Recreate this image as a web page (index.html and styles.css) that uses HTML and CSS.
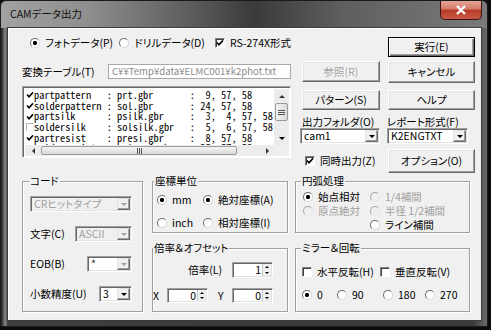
FILE: index.html
```html
<!DOCTYPE html>
<html lang="ja">
<head>
  <meta charset="UTF-8">
  <title>CAMデータ出力</title>
  <link rel="stylesheet" href="styles.css">
</head>
<body>
  <div class="window">
    <div class="titlebar">
      <span class="title">CAMデータ出力</span>
      <span class="close">
        <svg width="12" height="10" viewBox="0 0 12 10"><path d="M2 1 L10 9 M10 1 L2 9" stroke="#fff" stroke-width="2.4"/></svg>
      </span>
    </div>

    <div class="client">
      <div class="upper">
        <div class="left">
          <div class="modes">
            <span class="opt photo"><i class="radio on"></i>フォトデータ(P)</span>
            <span class="opt drill"><i class="radio"></i>ドリルデータ(D)</span>
            <span class="opt"><i class="check"><svg width="8" height="8" viewBox="0 0 8 8"><path d="M1 3.5 L3 5.8 L7 1.4" fill="none" stroke="#000" stroke-width="1.6"/></svg></i>RS-274X形式</span>
          </div>

          <div class="table-row">
            <span>変換テーブル(T)</span>
            <div class="field">C¥¥Temp¥data¥ELMC001¥k2phot.txt</div>
          </div>

          <div class="listbox">
            <div class="list-main">
              <div class="rows">
                <div class="row"><i class="lcheck"><svg width="8" height="8" viewBox="0 0 8 8"><path d="M1 3.5 L3 5.8 L7 1.4" fill="none" stroke="#000" stroke-width="1.6"/></svg></i>partpattern   : prt.gbr       :  9, 57, 58</div>
                <div class="row"><i class="lcheck"><svg width="8" height="8" viewBox="0 0 8 8"><path d="M1 3.5 L3 5.8 L7 1.4" fill="none" stroke="#000" stroke-width="1.6"/></svg></i>solderpattern : sol.gbr       : 24, 57, 58</div>
                <div class="row"><i class="lcheck"><svg width="8" height="8" viewBox="0 0 8 8"><path d="M1 3.5 L3 5.8 L7 1.4" fill="none" stroke="#000" stroke-width="1.6"/></svg></i>partsilk      : psilk.gbr     :  3,  4, 57, 58</div>
                <div class="row"><i class="lcheck empty"></i>soldersilk    : solsilk.gbr   :  5,  6, 57, 58</div>
                <div class="row"><i class="lcheck"><svg width="8" height="8" viewBox="0 0 8 8"><path d="M1 3.5 L3 5.8 L7 1.4" fill="none" stroke="#000" stroke-width="1.6"/></svg></i>partresist    : presi.gbr     :  8, 57, 58</div>
                <div class="row"><i class="lcheck"><svg width="8" height="8" viewBox="0 0 8 8"><path d="M1 3.5 L3 5.8 L7 1.4" fill="none" stroke="#000" stroke-width="1.6"/></svg></i>solderresist  : solresi.gbr   : 25, 57, 58</div>
              </div>
              <div class="vscroll">
                <span class="sarrow"><i class="tri up"></i></span>
                <span class="vthumb"><i class="grip-h"></i></span>
                <span class="vtrack"></span>
                <span class="sarrow"><i class="tri down"></i></span>
              </div>
            </div>
            <div class="hscroll">
              <span class="sarrow"><i class="tri left"></i></span>
              <span class="htrack"><span class="hthumb"><i class="grip-v"></i></span></span>
              <span class="sarrow"><i class="tri right"></i></span>
              <span class="corner"></span>
            </div>
          </div>
        </div>

        <div class="right">
          <button class="btn default c2">実行(E)</button>
          <button class="btn" disabled>参照(R)</button>
          <button class="btn tall">キャンセル</button>
          <button class="btn">パターン(S)</button>
          <button class="btn">ヘルプ</button>
          <span class="flabel">出力フォルダ(O)</span>
          <span class="flabel">レポート形式(F)</span>
          <div class="combo folder"><span class="val">cam1</span><span class="dd"><i class="tri down"></i></span></div>
          <div class="combo report"><span class="val">K2ENGTXT</span><span class="dd"><i class="tri down"></i></span></div>
          <span class="opt sync"><i class="check"><svg width="8" height="8" viewBox="0 0 8 8"><path d="M1 3.5 L3 5.8 L7 1.4" fill="none" stroke="#000" stroke-width="1.6"/></svg></i>同時出力(Z)</span>
          <button class="btn option">オプション(O)</button>
        </div>
      </div>

      <div class="groups">
        <fieldset class="group code">
          <legend>コード</legend>
          <div class="code-body">
            <div class="crow">
              <div class="combo off w-cr"><span class="val">CRヒットタイプ</span><span class="dd"><i class="tri down"></i></span></div>
            </div>
            <div class="crow">
              <span>文字(C)</span>
              <div class="combo off w-char"><span class="val">ASCII</span><span class="dd"><i class="tri down"></i></span></div>
            </div>
            <div class="crow">
              <span>EOB(B)</span>
              <div class="combo half w-eob"><span class="val">*</span><span class="dd"><i class="tri down"></i></span></div>
            </div>
            <div class="crow">
              <span>小数精度(U)</span>
              <div class="combo w-dec"><span class="val">3</span><span class="dd"><i class="tri down"></i></span></div>
            </div>
          </div>
        </fieldset>

        <div class="midcol">
          <fieldset class="group units">
            <legend>座標単位</legend>
            <div class="units-body">
              <span class="opt"><i class="radio on"></i>mm</span>
              <span class="opt"><i class="radio on"></i>絶対座標(A)</span>
              <span class="opt"><i class="radio"></i>inch</span>
              <span class="opt"><i class="radio"></i>相対座標(I)</span>
            </div>
          </fieldset>

          <fieldset class="group scale">
            <legend>倍率＆オフセット</legend>
            <div class="scale-body">
              <span class="scale-label">倍率(L)</span>
              <div class="spin c5"><span class="num">1</span><span class="arrows"><i class="tri up"></i><i class="tri down"></i></span></div>
              <span>X</span>
              <div class="spin"><span class="num">0</span><span class="arrows"><i class="tri up"></i><i class="tri down"></i></span></div>
              <span></span>
              <span>Y</span>
              <div class="spin"><span class="num">0</span><span class="arrows"><i class="tri up"></i><i class="tri down"></i></span></div>
            </div>
          </fieldset>
        </div>

        <div class="rightcol">
          <fieldset class="group arc">
            <legend>円弧処理</legend>
            <div class="arc-body">
              <span class="opt"><i class="radio on"></i>始点相対</span>
              <span class="opt dis"><i class="radio off"></i>1/4補間</span>
              <span class="opt dis"><i class="radio off"></i>原点絶対</span>
              <span class="opt dis"><i class="radio off"></i>半径 1/2補間</span>
              <span class="opt c2"><i class="radio"></i>ライン補間</span>
            </div>
          </fieldset>

          <fieldset class="group mirror">
            <legend>ミラー＆回転</legend>
            <div class="mirror-body">
              <div class="flip-row">
                <span class="opt"><i class="check"></i>水平反転(H)</span>
                <span class="opt"><i class="check"></i>垂直反転(V)</span>
              </div>
              <div class="rot-row">
                <span class="opt"><i class="radio on"></i>0</span>
                <span class="opt"><i class="radio"></i>90</span>
                <span class="opt"><i class="radio"></i>180</span>
                <span class="opt"><i class="radio"></i>270</span>
              </div>
            </div>
          </fieldset>
        </div>
      </div>
    </div>
  </div>
</body>
</html>
```

FILE: styles.css
```css
* {
  box-sizing: border-box;
}

body {
  margin: 0;
  background: #0c0c0c;
  font-family: "Noto Sans CJK JP", sans-serif;
  font-size: 10.5px;
  line-height: 12px;
  font-feature-settings: "palt";
  color: #000;
}

/* window frame (Aero-like glass): light title strip, dark side frames */
.window {
  width: 488px;
  height: 327px;
  padding: 0 6px 6px 7px;
  border: 1px solid #1a1a1a;
  border-radius: 6px 6px 0 0;
  background:
    linear-gradient(to right, #202020, #4a4a4a 2px, #8a8a8a 4px, #3e3e3e 7px, #3a3a3a 97%, #6a6a6a) 0 27px / 100% 100% no-repeat,
    linear-gradient(to right, #a2a2a2 0%, #8e8e8e 18%, #5a5a5a 40%, #3a3a3a 52%, #5e5e5e 70%, #7a7a7a 100%);
  display: flex;
  flex-direction: column;
}

.titlebar {
  height: 27px;
  display: flex;
  justify-content: space-between;
  align-items: flex-start;
  margin-right: -1px;
}

.title {
  padding: 7px 0 0 2px;
  font-size: 10.5px;
  color: #111;
}

.close {
  width: 42px;
  height: 19px;
  border: 1px solid #3a1510;
  border-top: none;
  border-radius: 0 0 5px 5px;
  background: linear-gradient(#e3a697 0%, #d47a68 45%, #b73a26 50%, #c85a45 100%);
  display: flex;
  align-items: center;
  justify-content: center;
}

.client {
  height: 292px;
  background: #f0f0f0;
  box-shadow: 0 0 0 1px #3c3c3c, inset 1px 1px #fff;
}

/* top part */
.upper {
  height: 147px;
  padding-top: 9px;
  display: flex;
}

.left {
  width: 269px;
  margin-left: 14px;
  margin-right: 11px;
  display: flex;
  flex-direction: column;
}

.modes {
  height: 12px;
  margin-left: 8px;
  display: flex;
  align-items: center;
}

.opt {
  display: flex;
  align-items: center;
  gap: 5px;
  white-space: nowrap;
  height: 14px;
}

.opt.photo {
  width: 120px;
}

.opt.drill {
  width: 128px;
}

.dis {
  color: #a0a0a0;
}

.radio {
  width: 10px;
  height: 10px;
  flex-shrink: 0;
  border-radius: 50%;
  border: 1px solid;
  border-color: #6e6e6e #d6d6d6 #d6d6d6 #6e6e6e;
  background: #fff;
}

.radio.on {
  background: radial-gradient(circle, #000 0 1.8px, #fff 2.4px);
}

.radio.off {
  background: #f0f0f0;
  border-color: #a8a8a8 #e6e6e6 #e6e6e6 #a8a8a8;
}

.check {
  width: 10px;
  height: 10px;
  flex-shrink: 0;
  background: #fff;
  border: 1px solid;
  border-color: #808080 #fff #fff #808080;
  box-shadow: inset 1px 1px #404040;
  display: flex;
  align-items: center;
  justify-content: center;
}

.table-row {
  height: 15px;
  margin-top: 15px;
  display: flex;
  align-items: center;
}

.table-row span {
  width: 86px;
  flex-shrink: 0;
}

.field {
  width: 183px;
  height: 15px;
  padding-left: 3px;
  background: #fff;
  color: #8a8a8a;
  border: 1px solid #a9a9a9;
  white-space: nowrap;
  overflow: hidden;
  font-size: 9.6px;
  line-height: 13px;
}

/* list box */
.listbox {
  height: 72px;
  margin-top: 7px;
  border: 1px solid;
  border-color: #a0a0a0 #fff #fff #a0a0a0;
  box-shadow: inset 1px 1px #696969;
  background: #fff;
  padding: 2px 1px 1px 2px;
  display: flex;
  flex-direction: column;
}

.list-main {
  flex: 1;
  display: flex;
  min-height: 0;
}

.rows {
  flex: 1;
  overflow: hidden;
  padding: 1px 0 0 1px;
  font-family: "Noto Sans Mono CJK JP", "DejaVu Sans Mono", monospace;
  font-size: 10.4px;
  font-feature-settings: normal;
}

.row {
  height: 10.7px;
  line-height: 10.7px;
  white-space: pre;
  display: flex;
  align-items: center;
}

.lcheck {
  width: 8px;
  height: 8px;
  flex-shrink: 0;
  display: flex;
  align-items: center;
  justify-content: center;
}

.lcheck.empty {
  border: 1px solid;
  border-color: #b0b0b0 #f0f0f0 #f0f0f0 #b0b0b0;
}

.vscroll {
  width: 15px;
  background: #ececec;
  display: flex;
  flex-direction: column;
}

.sarrow {
  width: 15px;
  height: 14px;
  flex-shrink: 0;
  display: flex;
  align-items: center;
  justify-content: center;
}

.vthumb {
  height: 18px;
  margin: 0 1px;
  border: 1px solid #9a9a9a;
  border-radius: 2px;
  background: linear-gradient(to right, #f4f4f4, #dadada);
  display: flex;
  align-items: center;
  justify-content: center;
}

.vtrack {
  flex: 1;
}

.grip-h {
  width: 7px;
  height: 5px;
  border-top: 1px solid #555;
  border-bottom: 1px solid #555;
  background: linear-gradient(#555, #555) center / 100% 1px no-repeat;
}

.grip-v {
  width: 5px;
  height: 6px;
  border-left: 1px solid #555;
  border-right: 1px solid #555;
  background: linear-gradient(#555, #555) center / 1px 100% no-repeat;
}

.hscroll {
  height: 11px;
  background: #ececec;
  display: flex;
}

.hscroll .sarrow {
  height: 11px;
  width: 14px;
}

.htrack {
  flex: 1;
  padding: 1px 0;
}

.hthumb {
  width: 196px;
  height: 100%;
  margin-left: 2px;
  border: 1px solid #9a9a9a;
  border-radius: 2px;
  background: linear-gradient(#f4f4f4, #dadada);
  display: flex;
  align-items: center;
  justify-content: center;
}

.corner {
  width: 15px;
  background: #f0f0f0;
}

.tri {
  width: 0;
  height: 0;
  border: 3px solid transparent;
}

.tri.up {
  border-bottom-color: #333;
  border-top-width: 0;
}

.tri.down {
  border-top-color: #000;
  border-bottom-width: 0;
}

.tri.left {
  border-right-color: #333;
  border-left-width: 0;
}

.tri.right {
  border-left-color: #333;
  border-right-width: 0;
}

/* right button panel */
.right {
  display: grid;
  grid-template-columns: 78px 87px;
  grid-template-rows: 24px 29px 26px 12px 21px 24px;
  column-gap: 8px;
  align-items: start;
}

.btn {
  height: 20px;
  padding: 0;
  font: inherit;
  color: #000;
  background: #f0f0f0;
  border: 1px solid;
  border-color: #fff #696969 #696969 #fff;
  box-shadow: inset -1px -1px #a0a0a0, inset 1px 1px #e3e3e3;
}

.btn.c2 {
  grid-column: 2;
}

.btn.default {
  border: 1px solid #000;
  box-shadow: inset 1px 1px #fff, inset -1px -1px #696969, inset -2px -2px #a0a0a0;
}

.btn:disabled {
  color: #a0a0a0;
  text-shadow: 1px 1px #fff;
}

.btn.tall {
  height: 22px;
}

.right .btn:disabled {
  height: 21px;
}

.btn.option {
  height: 24px;
}

.flabel {
  align-self: center;
  white-space: nowrap;
}

.flabel + .flabel {
  margin-left: -1px;
}

.sync {
  align-self: center;
  margin-left: 3px;
}

/* combo box */
.combo {
  height: 16px;
  display: flex;
  padding: 1px;
  background: #fff;
  border: 1px solid;
  border-color: #a0a0a0 #fff #fff #a0a0a0;
  box-shadow: inset 1px 1px #696969, inset -1px -1px #e3e3e3;
}

.combo .val {
  flex: 1;
  padding-left: 2px;
  line-height: 12px;
  white-space: nowrap;
  overflow: hidden;
}

.combo .dd {
  width: 13px;
  height: 12px;
  flex-shrink: 0;
  background: #f0f0f0;
  border: 1px solid;
  border-color: #e3e3e3 #696969 #696969 #e3e3e3;
  box-shadow: inset -1px -1px #a0a0a0;
  display: flex;
  align-items: center;
  justify-content: center;
}

.combo.folder {
  width: 80px;
  margin-left: -2px;
}

.combo.report {
  width: 81px;
  margin-left: -1px;
}

.combo.off,
.combo.half {
  color: #a0a0a0;
}

.combo.off {
  background: #f0f0f0;
}

.combo.half .val {
  color: #333;
}

.combo.off .tri.down,
.combo.half .tri.down {
  border-top-color: #a0a0a0;
}

.w-cr { width: 102px; }
.w-char { width: 57px; }
.w-eob { width: 45px; }
.w-dec { width: 33px; }

/* group boxes */
.groups {
  display: flex;
  align-items: flex-start;
  padding-left: 14px;
}

.group {
  margin: 0;
  padding: 0;
  min-width: 0;
  border: 1px solid #a0a0a0;
  box-shadow: inset 1px 1px #fff, 1px 1px #fff;
}

.group legend {
  padding: 0 1px;
  line-height: 12px;
  background: #f0f0f0;
}

.code {
  width: 121px;
  height: 137px;
}

.code legend {
  margin-left: 6px;
}

.code-body {
  padding: 9px 0 0 7px;
  display: flex;
  flex-direction: column;
  gap: 14px;
}

.crow {
  width: 102px;
  height: 16px;
  display: flex;
  justify-content: space-between;
  align-items: center;
  white-space: nowrap;
}

.midcol {
  width: 136px;
  margin-left: 9px;
}

.rightcol {
  width: 175px;
  margin-left: 7px;
}

.units,
.arc {
  height: 58px;
}

.scale,
.mirror {
  height: 70px;
  margin-top: 9px;
}

.units legend {
  margin-left: 1px;
}

.arc legend,
.mirror legend {
  margin-left: 5px;
}

.units-body {
  padding: 6px 0 0 4px;
  display: grid;
  grid-template-columns: 46px auto;
  grid-auto-rows: 14px;
  row-gap: 9px;
}

.scale-body {
  padding-top: 8px;
  display: grid;
  grid-template-columns: 14px 41px 10px 14px 41px;
  grid-template-rows: 16px 15px;
  row-gap: 10px;
  align-items: center;
}

.scale-label {
  grid-column: 1 / 5;
  text-align: right;
  padding-right: 10px;
}

.spin.c5 {
  grid-column: 5;
}

.spin {
  height: 100%;
  display: flex;
  padding: 1px;
  background: #fff;
  border: 1px solid;
  border-color: #a0a0a0 #fff #fff #a0a0a0;
  box-shadow: inset 1px 1px #696969, inset -1px -1px #e3e3e3;
}

.spin .num {
  flex: 1;
  text-align: right;
  padding-right: 1px;
  line-height: 12px;
}

.spin .arrows {
  width: 9px;
  display: flex;
  flex-direction: column;
  align-items: center;
  justify-content: space-around;
  background: #f0f0f0;
  border-left: 1px solid #c8c8c8;
}

.spin .tri {
  border-width: 2px;
}

.spin .tri.up {
  border-top-width: 0;
  border-bottom-color: #000;
}

.spin .tri.down {
  border-bottom-width: 0;
}

.arc-body {
  padding: 3px 0 0 7px;
  display: grid;
  grid-template-columns: 67px auto;
  grid-auto-rows: 14px;
}

.arc-body .c2 {
  grid-column: 2;
}

.mirror-body {
  padding: 11px 0 0 6px;
}

.flip-row {
  display: grid;
  grid-template-columns: 78px auto;
}

.rot-row {
  margin-top: 9px;
  display: grid;
  grid-template-columns: 35px 46px 42px auto;
}
```
